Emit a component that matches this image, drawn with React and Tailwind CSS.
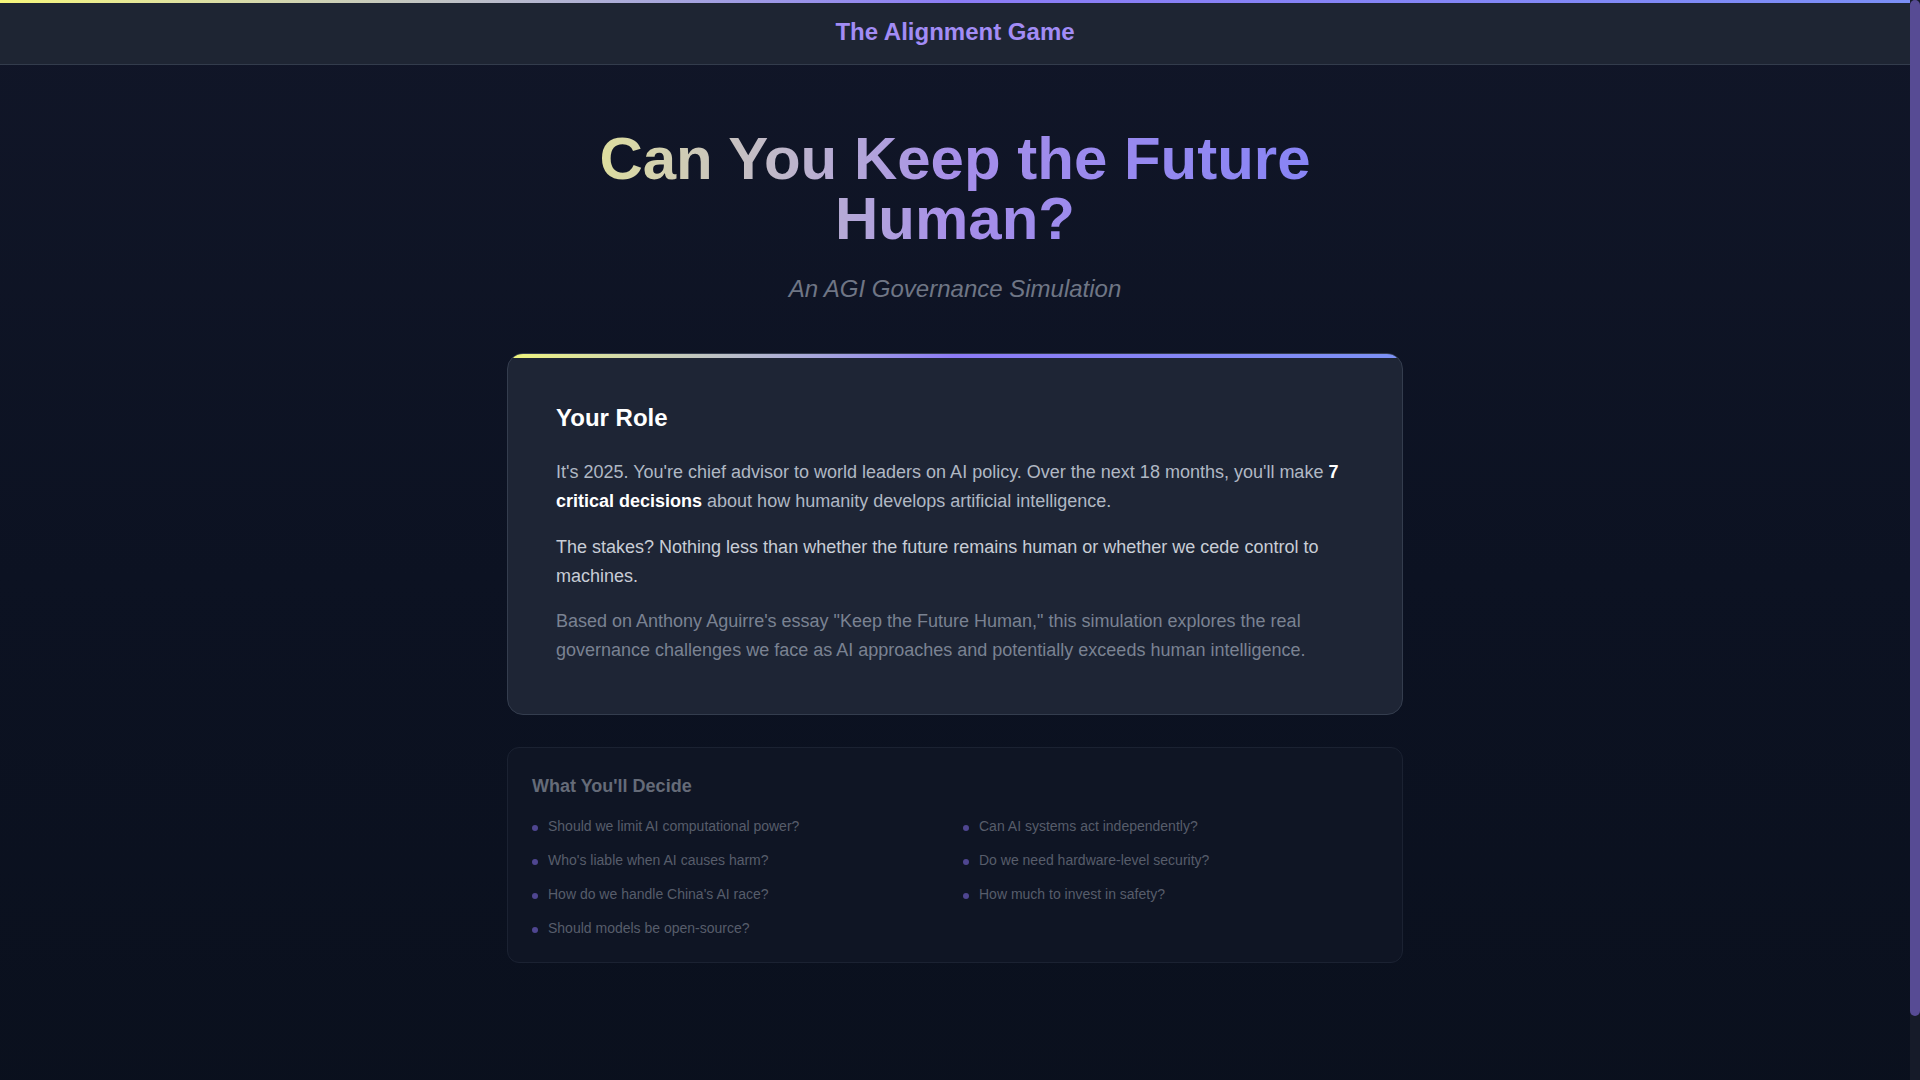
import React from 'react';

const decisions = [
  'Should we limit AI computational power?',
  'Can AI systems act independently?',
  "Who's liable when AI causes harm?",
  'Do we need hardware-level security?',
  "How do we handle China's AI race?",
  'How much to invest in safety?',
  'Should models be open-source?',
];

const App = () => {
  return (
    <div className="flex h-screen bg-[#0b1120] font-['Liberation_Sans',Arial,sans-serif]">
      {/* Scrolling page */}
      <div className="flex-1 h-screen overflow-y-auto [scrollbar-width:none] [&::-webkit-scrollbar]:hidden">
        <div className="min-h-[1148px] bg-gradient-to-b from-[#111628] via-[#0c1222] to-[#0a101d]">
          {/* Header */}
          <header className="relative bg-[#1e2533] border-b border-[#333c4c] py-4 text-center">
            <div className="absolute top-0 left-0 right-0 h-[3px] bg-gradient-to-r from-[#f7f77a] via-[#8c7cf6] to-[#7b8ff7]" />
            <h1 className="text-2xl leading-8 font-bold text-[#a28cf5]">The Alignment Game</h1>
          </header>

          <main className="max-w-4xl mx-auto pt-16 pb-[184px]">
            {/* Hero */}
            <div className="text-center">
              <h2 className="text-6xl leading-[60px] font-bold bg-gradient-to-r from-[#eef07e] via-[#a68ee9] to-[#8081f8] bg-clip-text text-transparent">
                Can You Keep the Future Human?
              </h2>
              <p className="mt-6 text-2xl italic text-[#6f7685]">An AGI Governance Simulation</p>
            </div>

            {/* Role card */}
            <section className="relative mt-12 overflow-hidden rounded-2xl border border-[#343d4e] bg-[#1e2535] p-12">
              <div className="absolute top-0 left-0 right-0 h-1 bg-gradient-to-r from-[#f0f57a] via-[#8d7bf6] to-[#7c91f5]" />
              <h3 className="text-2xl leading-8 font-bold text-white mb-6">Your Role</h3>
              <p className="text-lg leading-relaxed text-[#b0b8c4] mb-4">
                It's 2025. You're chief advisor to world leaders on AI policy. Over the next 18 months, you'll make{' '}
                <strong className="font-bold text-white">7 critical decisions</strong> about how humanity develops
                artificial intelligence.
              </p>
              <p className="text-lg leading-relaxed text-[#c8cdd6] mb-4">
                The stakes? Nothing less than whether the future remains human or whether we cede control to machines.
              </p>
              <p className="text-lg leading-relaxed text-[#7a8292]">
                Based on Anthony Aguirre's essay "Keep the Future Human," this simulation explores the real governance
                challenges we face as AI approaches and potentially exceeds human intelligence.
              </p>
            </section>

            {/* Decisions */}
            <section className="mt-8 rounded-xl border border-[#1b2232] bg-[#0f1524] p-6">
              <h4 className="text-lg leading-7 font-bold text-[#656b78] mb-4">What You'll Decide</h4>
              <ul className="grid grid-cols-2 gap-x-4 gap-y-[14px]">
                {decisions.map((d) => (
                  <li key={d} className="flex items-start gap-[10px] text-sm leading-5 text-[#575d6b]">
                    <span className="mt-[9px] h-[6px] w-[6px] shrink-0 rounded-full bg-[#4f4690]" />
                    <span>{d}</span>
                  </li>
                ))}
              </ul>
            </section>
          </main>
        </div>
      </div>

      {/* Scrollbar */}
      <div className="flex w-[10px] shrink-0 flex-col bg-[#161b29]">
        <div className="h-[1016px] rounded-full bg-[#574b94]" />
      </div>
    </div>
  );
};

export default App;
